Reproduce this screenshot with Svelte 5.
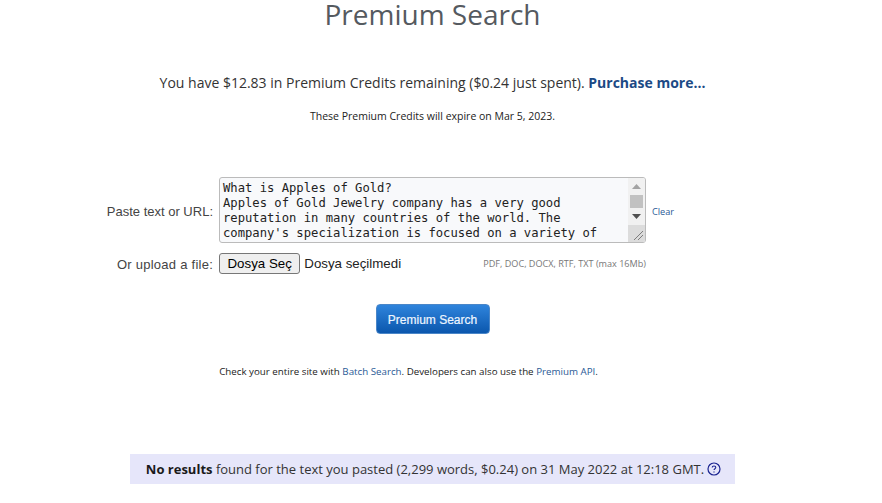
<script>
  const intro = `What is Apples of Gold?
Apples of Gold Jewelry company has a very good reputation in many countries of the world. The company's specialization is focused on a variety of jewelry, such as rings, necklaces and bracelets.
`;
  let text = $state(intro + "The company offers a large selection of products for every occasion and budget.\n".repeat(12));
</script>

<div class="page">
  <h1>Premium Search</h1>
  <p class="credits">You have $12.83 in Premium Credits remaining ($0.24 just spent). <a href="#buy">Purchase more...</a></p>
  <p class="expire">These Premium Credits will expire on Mar 5, 2023.</p>

  <form class="form" onsubmit={(e) => e.preventDefault()}>
    <label for="txt" class="lbl">Paste text or URL:</label>
    <div class="box">
      <textarea id="txt" bind:value={text} spellcheck="false"></textarea>
      
      <div class="sb" aria-hidden="true">
        <div class="sb-btn"><svg width="9" height="5" viewBox="0 0 9 5"><path d="M4.5 0 9 5H0z" fill="#a3a3a3" /></svg></div>
        <div class="sb-thumb"></div>
        <div class="sb-btn"><svg width="9" height="5" viewBox="0 0 9 5"><path d="M0 0h9L4.5 5z" fill="#505050" /></svg></div>
        <div class="sb-corner">
          <svg width="17" height="17" viewBox="0 0 17 17" fill="none" stroke="#7d7d7d"><path d="M6 15 15 6M10 15l5-5" /></svg>
        </div>
      </div>
    </div>
    <a class="clear" href="#clear">Clear</a>

    <span class="lbl wide">Or upload a file:</span>
    <div class="file">
      <button type="button" class="pick">Dosya Seç</button>
      <span>Dosya seçilmedi</span>
      <small>PDF, DOC, DOCX, RTF, TXT (max 16Mb)</small>
    </div>
  </form>

  <button type="button" class="go">Premium Search</button>

  <p class="batch">Check your entire site with <a href="#batch">Batch Search</a>. Developers can also use the <a href="#api">Premium API</a>.</p>

  <div class="result">
    <span><b>No results</b> found for the text you pasted (2,299 words, $0.24) on 31 May 2022 at 12:18 GMT.</span>
    <svg width="14" height="14" viewBox="0 0 14 14" fill="none" stroke="#1a2390" aria-hidden="true">
      <circle cx="7" cy="7" r="6" stroke-width="1.2" />
      <path d="M5.2 5.6c0-1 .8-1.6 1.8-1.6s1.8.6 1.8 1.5c0 1.2-1.8 1.3-1.8 2.6" stroke-width="1.1" />
      <path d="M7 9.4v1.1" stroke-width="1.2" />
    </svg>
  </div>
</div>

<style>
  :global(body) { margin: 0; background: #fff; overflow: hidden; }
  .page { width: 865px; height: 503px; display: flex; flex-direction: column; align-items: center; font-family: "Open Sans", sans-serif; color: #333; overflow: hidden; }
  h1 { margin: -1px 0 0; font-size: 28px; font-weight: 400; line-height: 30px; color: #555a60; }
  .credits { margin: 44px 0 0; font-size: 14px; line-height: 20px; }
  .credits a { color: #1c4a85; font-weight: 700; text-decoration: none; }
  .expire { margin: 16px 0 0; font-size: 10.5px; line-height: 14px; color: #222; }
  .form { margin-top: 54px; width: 865px; display: grid; grid-template-columns: 1fr 427px 1fr; column-gap: 6px; row-gap: 10px; align-items: center; }
  .lbl { justify-self: end; margin-top: 2px; font-family: "Liberation Sans", sans-serif; font-size: 13px; color: #444; white-space: nowrap; }
  .lbl.wide { margin-top: 1px; letter-spacing: .25px; }
  .box { position: relative; box-sizing: border-box; height: 66px; border: 1px solid #bbb; border-radius: 3px; background: #f8f9fb; overflow: hidden; }
  textarea { display: block; box-sizing: border-box; width: 100%; height: 63px; margin: 0; padding: 3px 20px 0 3px; border: 0; outline: none; font-family: "DejaVu Sans Mono", monospace; font-size: 12.2px; line-height: 15px; color: #222; resize: none; background: transparent; }
  .sb { position: absolute; top: 0; right: 0; bottom: 0; width: 17px; display: flex; flex-direction: column; background: #f1f1f1; }
  .sb-btn { height: 17px; flex: none; display: flex; align-items: center; justify-content: center; }
  .sb-thumb { height: 13px; flex: none; margin: 0 2px; background: #c1c1c1; }
  .sb-corner { height: 17px; flex: none; background: #dcdcdc; }
  .sb-corner svg { display: block; }
  .clear { justify-self: start; margin-top: 3px; font-size: 9.2px; color: #2a5a96; text-decoration: none; }
  .file { grid-column: 2; display: flex; align-items: center; font-family: "Liberation Sans", sans-serif; font-size: 13.3px; color: #222; }
  .pick { height: 21px; padding: 0 7.5px; margin-right: 4px; border: 1px solid #777; border-radius: 3px; background: #efefef; font: inherit; color: #000; }
  .file small { margin-left: auto; font-family: "Open Sans", sans-serif; font-size: 9.1px; color: #777; }
  .go { margin-top: 30px; flex: none; width: 114px; height: 30px; padding: 1px 0 0; border: 1px solid #4a86c8; border-radius: 4px; background: linear-gradient(#2f84dc, #0b57ad); color: #eef6ff; font-family: "Liberation Sans", sans-serif; font-size: 12px; -webkit-text-stroke: .2px #eef6ff; }
  .batch { margin: 31px 48px 0 0; font-size: 9.75px; line-height: 14px; color: #222; }
  .batch a { color: #2a5a96; text-decoration: none; }
  .result { box-sizing: border-box; margin-top: 75px; flex: none; width: 605px; height: 30px; padding-left: 2px; display: flex; align-items: center; justify-content: center; gap: 3px; background: #e6e6fa; font-size: 13px; }
  .result b { font-weight: 700; color: #1a1a1a; }
</style>
